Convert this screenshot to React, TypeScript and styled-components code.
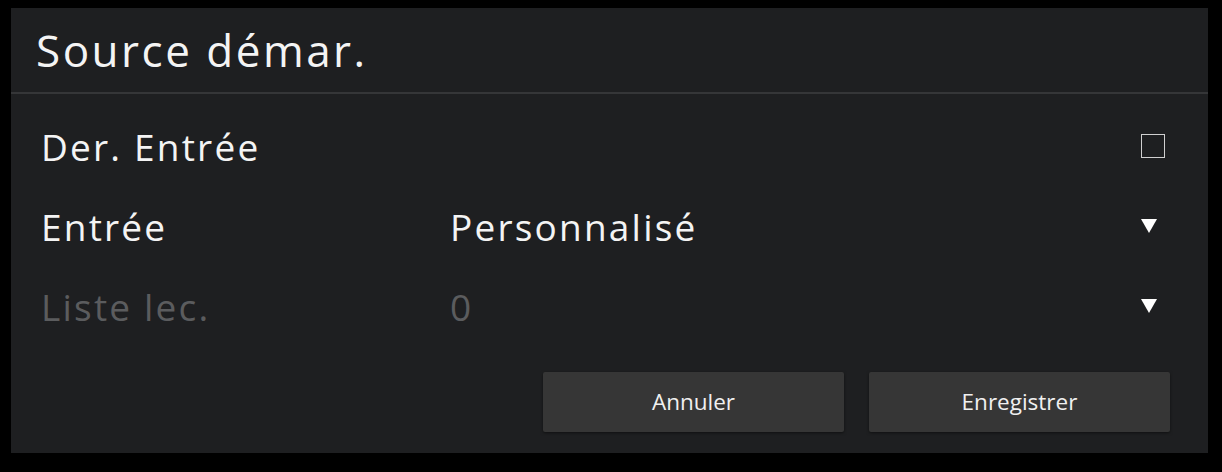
import React from 'react';
import styled, { createGlobalStyle } from 'styled-components';

const GlobalStyle = createGlobalStyle`
    html, body {
        margin: 0;
        padding: 0;
        background: #000;
    }
    body {
        font-family: 'Open Sans', Lato, sans-serif;
    }
`;

const Page = styled.div`
    width: 1222px;
    height: 472px;
    padding: 8px 14px 19px 11px;
    box-sizing: border-box;
`;

const Dialog = styled.div`
    width: 1197px;
    height: 445px;
    background: #1e1f21;
    display: flex;
    flex-direction: column;
`;

const Header = styled.div`
    height: 84px;
    padding-left: 25px;
    display: flex;
    align-items: center;
    border-bottom: 2px solid #353638;
    color: #f4f4f4;
    font-size: 44px;
    letter-spacing: 2.5px;
`;

const Body = styled.div`
    padding: 12px 42px 0 30px;
    display: flex;
    flex-direction: column;
`;

const Row = styled.div<{ disabled?: boolean }>`
    height: 80px;
    display: grid;
    grid-template-columns: 409px 1fr 25px;
    align-items: center;
    font-size: 37px;
    letter-spacing: 2.2px;
    color: ${props => (props.disabled ? '#5b5c5e' : '#f4f4f4')};
`;

const Checkbox = styled.div`
    width: 22px;
    height: 22px;
    border: 1.5px solid #d0d0d0;
    justify-self: end;
    margin-right: 1px;
`;

const Arrow = styled.div`
    width: 0;
    height: 0;
    border-left: 8.5px solid transparent;
    border-right: 8.5px solid transparent;
    border-top: 14px solid #fff;
    justify-self: end;
    margin-right: 9px;
`;

const Footer = styled.div`
    display: flex;
    justify-content: flex-end;
    gap: 25px;
    padding: 26px 38px 0 0;
`;

const Button = styled.button`
    width: 301px;
    height: 60px;
    border: none;
    border-radius: 2px;
    background: #363636;
    color: #f0f0f0;
    font-family: 'Open Sans', sans-serif;
    font-size: 22.5px;
    padding-bottom: 3px;
    box-shadow: 0 1px 3px rgba(0, 0, 0, 0.5);
`;

const rows = [
    { label: 'Der. Entrée', value: '', control: 'checkbox' },
    { label: 'Entrée', value: 'Personnalisé', control: 'arrow' },
    { label: 'Liste lec.', value: '0', control: 'arrow', disabled: true },
];

export default function App() {
    return (
        <>
            <GlobalStyle />
            <Page>
                <Dialog>
                    <Header>Source démar.</Header>
                    <Body>
                        {rows.map(row => (
                            <Row key={row.label} disabled={row.disabled}>
                                <span>{row.label}</span>
                                <span>{row.value}</span>
                                {row.control === 'checkbox' ? <Checkbox /> : <Arrow />}
                            </Row>
                        ))}
                    </Body>
                    <Footer>
                        <Button>Annuler</Button>
                        <Button>Enregistrer</Button>
                    </Footer>
                </Dialog>
            </Page>
        </>
    );
}
